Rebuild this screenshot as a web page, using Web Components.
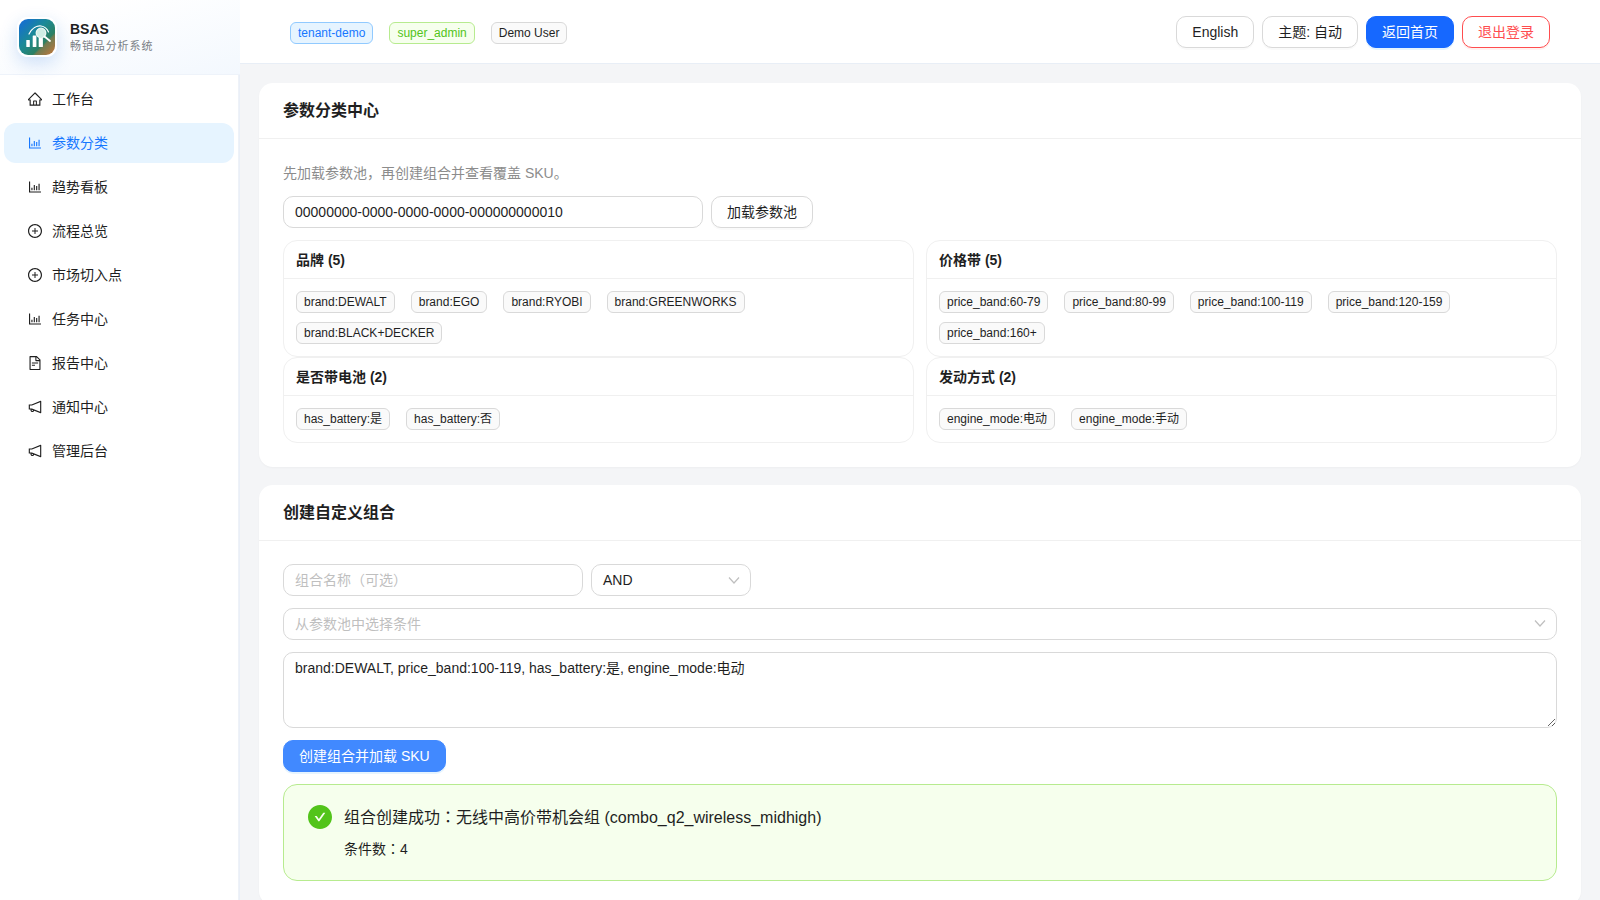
<!DOCTYPE html>
<html lang="zh">
<head>
<meta charset="utf-8">
<title>BSAS</title>
<style>
  html, body { margin: 0; height: 100%; background: #f4f5f7; }
  body { font-family: "Liberation Sans", "Noto Sans CJK SC", sans-serif; font-size: 14px; color: #1f1f1f; }
  /* the reference centres the full width colon in its cell */
  .mid { font-family: "Noto Sans CJK TC", sans-serif; line-height: 1; }
</style>
</head>
<body>
<bs-app>
  <bs-sidebar slot="side">
    <bs-nav icon="home">工作台</bs-nav>
    <bs-nav icon="chart" active>参数分类</bs-nav>
    <bs-nav icon="chart">趋势看板</bs-nav>
    <bs-nav icon="plus">流程总览</bs-nav>
    <bs-nav icon="plus">市场切入点</bs-nav>
    <bs-nav icon="chart">任务中心</bs-nav>
    <bs-nav icon="file">报告中心</bs-nav>
    <bs-nav icon="bell">通知中心</bs-nav>
    <bs-nav icon="bell">管理后台</bs-nav>
  </bs-sidebar>

  <bs-topbar slot="top">
    <bs-tag slot="left" tone="blue">tenant-demo</bs-tag>
    <bs-tag slot="left" tone="green">super_admin</bs-tag>
    <bs-tag slot="left">Demo User</bs-tag>
    <bs-button slot="right">English</bs-button>
    <bs-button slot="right">主题: 自动</bs-button>
    <bs-button slot="right" kind="primary">返回首页</bs-button>
    <bs-button slot="right" kind="danger">退出登录</bs-button>
  </bs-topbar>

  <bs-card heading="参数分类中心">
    <bs-hint>先加载参数池，再创建组合并查看覆盖 SKU。</bs-hint>
    <bs-row>
      <bs-field width="420">00000000-0000-0000-0000-000000000010</bs-field>
      <bs-button>加载参数池</bs-button>
    </bs-row>
    <bs-groups>
      <bs-group heading="品牌 (5)">
        <bs-tag>brand:DEWALT</bs-tag><bs-tag>brand:EGO</bs-tag><bs-tag>brand:RYOBI</bs-tag><bs-tag>brand:GREENWORKS</bs-tag><bs-tag>brand:BLACK+DECKER</bs-tag>
      </bs-group>
      <bs-group heading="价格带 (5)">
        <bs-tag>price_band:60-79</bs-tag><bs-tag>price_band:80-99</bs-tag><bs-tag>price_band:100-119</bs-tag><bs-tag>price_band:120-159</bs-tag><bs-tag>price_band:160+</bs-tag>
      </bs-group>
      <bs-group heading="是否带电池 (2)">
        <bs-tag>has_battery:是</bs-tag><bs-tag>has_battery:否</bs-tag>
      </bs-group>
      <bs-group heading="发动方式 (2)">
        <bs-tag>engine_mode:电动</bs-tag><bs-tag>engine_mode:手动</bs-tag>
      </bs-group>
    </bs-groups>
  </bs-card>

  <bs-card heading="创建自定义组合">
    <bs-row>
      <bs-field width="300" placeholder>组合名称（可选）</bs-field>
      <bs-field width="160" arrow>AND</bs-field>
    </bs-row>
    <bs-field placeholder arrow style="margin-top:12px">从参数池中选择条件</bs-field>
    <bs-textarea style="margin-top:12px">brand:DEWALT, price_band:100-119, has_battery:是, engine_mode:电动</bs-textarea>
    <bs-button kind="soft" style="margin-top:12px">创建组合并加载 SKU</bs-button>
    <bs-alert style="margin-top:12px">
      <span slot="heading">组合创建成功<span class="mid" lang="zh-TW">：</span>无线中高价带机会组 (combo_q2_wireless_midhigh)</span>
      条件数<span class="mid" lang="zh-TW">：</span>4
    </bs-alert>
  </bs-card>
</bs-app>

<script>
// antd outlined icon paths, viewBox 64 64 896 896
const ICONS = {
  home: 'M946.5 505L560.1 118.8l-25.9-25.9a31.5 31.5 0 00-44.4 0L77.5 505a63.9 63.9 0 00-18.8 46c.4 35.2 29.7 63.3 64.9 63.3h42.5V940h691.8V614.3h43.4c17.1 0 33.2-6.7 45.3-18.8a63.6 63.6 0 0018.7-45.3c0-17-6.7-33.1-18.8-45.2zM568 868H456V664h112v204zm217.9-325.7V868H632V640c0-22.1-17.9-40-40-40H432c-22.1 0-40 17.9-40 40v228H238.1V542.3h-96v-.1L512 172l28.9 28.9 342 341.3h-97z',
  chart: 'M888 792H200V168c0-4.4-3.6-8-8-8h-56c-4.4 0-8 3.6-8 8v688c0 4.4 3.6 8 8 8h752c4.4 0 8-3.6 8-8v-56c0-4.4-3.6-8-8-8zm-600-80h56c4.4 0 8-3.6 8-8V560c0-4.4-3.6-8-8-8h-56c-4.4 0-8 3.6-8 8v144c0 4.4 3.6 8 8 8zm152 0h56c4.4 0 8-3.6 8-8V384c0-4.4-3.6-8-8-8h-56c-4.4 0-8 3.6-8 8v320c0 4.4 3.6 8 8 8zm152 0h56c4.4 0 8-3.6 8-8V462c0-4.4-3.6-8-8-8h-56c-4.4 0-8 3.6-8 8v242c0 4.4 3.6 8 8 8zm152 0h56c4.4 0 8-3.6 8-8V304c0-4.4-3.6-8-8-8h-56c-4.4 0-8 3.6-8 8v400c0 4.4 3.6 8 8 8z',
  plus: 'M696 480H544V328c0-4.4-3.6-8-8-8h-48c-4.4 0-8 3.6-8 8v152H328c-4.4 0-8 3.6-8 8v48c0 4.4 3.6 8 8 8h152v152c0 4.4 3.6 8 8 8h48c4.4 0 8-3.6 8-8V544h152c4.4 0 8-3.6 8-8v-48c0-4.4-3.6-8-8-8zM512 64C264.6 64 64 264.6 64 512s200.6 448 448 448 448-200.6 448-448S759.4 64 512 64zm0 820c-205.4 0-372-166.6-372-372s166.6-372 372-372 372 166.6 372 372-166.6 372-372 372z',
  file: 'M854.6 288.6L639.4 73.4c-6-6-14.1-9.4-22.6-9.4H192c-17.7 0-32 14.3-32 32v832c0 17.7 14.3 32 32 32h640c17.7 0 32-14.3 32-32V311.3c0-8.5-3.4-16.7-9.4-22.7zM790.2 326H602V137.8L790.2 326zm1.8 562H232V136h302v216a42 42 0 0042 42h216v494zM504 618H320c-4.4 0-8 3.6-8 8v48c0 4.4 3.6 8 8 8h184c4.4 0 8-3.6 8-8v-48c0-4.4-3.6-8-8-8zM312 490v48c0 4.4 3.6 8 8 8h384c4.4 0 8-3.6 8-8v-48c0-4.4-3.6-8-8-8H320c-4.4 0-8 3.6-8 8z',
  bell: 'M880 112c-3.8 0-7.7.7-11.6 2.3L292 345.9H128c-8.8 0-16 7.4-16 16.6v299c0 9.2 7.2 16.6 16 16.6h101.7c-3.7 11.6-5.7 23.9-5.7 36.4 0 65.9 53.8 119.5 120 119.5 55.4 0 102.1-37.6 115.9-88.4l408.6 164.2c3.9 1.5 7.8 2.3 11.6 2.3 16.9 0 32-14.2 32-33.2V145.2C912 126.2 897 112 880 112zM344 762.3c-26.5 0-48-21.4-48-47.8 0-11.2 3.9-21.9 11-30.4l84.9 34.1c-2 24.6-22.7 44.1-47.9 44.1zm496 58.4L318.8 611.3l-12.9-5.2H184V417.9h121.9l12.9-5.2L840 203.3v617.4z',
  check: 'M512 64C264.6 64 64 264.6 64 512s200.6 448 448 448 448-200.6 448-448S759.4 64 512 64zm193.5 301.7l-210.6 292a31.8 31.8 0 01-51.7 0L318.5 484.9c-3.8-5.3 0-12.7 6.5-12.7h46.9c10.2 0 19.9 4.9 25.9 13.3l71.2 98.8 157.2-218c6-8.3 15.6-13.3 25.9-13.3H699c6.5 0 10.3 7.4 6.5 12.7z'
};

// small helper so every element gets an open shadow root with its own style
class Base extends HTMLElement {
  constructor() {
    super();
    this.shadowDOM = this.attachShadow({mode: 'open'});
  }
  connectedCallback() {
    this.shadowDOM.innerHTML = this.render();
  }
}

class BsApp extends Base {
  render() {
    return `
      <style>
        :host { display: flex; height: 100vh; overflow: hidden; background: #f4f5f7; }
        .right { flex: 1; min-width: 0; display: flex; flex-direction: column; }
        main { flex: 1; min-height: 0; overflow: hidden; padding: 19px 19px 0; display: flex; flex-direction: column; gap: 18px; }
      </style>
      <slot name="side"></slot>
      <div class="right">
        <slot name="top"></slot>
        <main><slot></slot></main>
      </div>`;
  }
}

class BsSidebar extends Base {
  render() {
    return `
      <style>
        :host { display: flex; flex-direction: column; flex: none; width: 240px; box-sizing: border-box; height: 100%; background: #fff; border-right: 1px solid #eaeff7; position: relative; }
        .brand { height: 75px; box-sizing: border-box; display: flex; align-items: center; gap: 13px; padding: 0 0 1px 17px; margin-right: -1px;
          background: linear-gradient(165deg, #ffffff 20%, #f3f8fe 100%); border-bottom: 1px solid #eef3fa; }
        .logo { width: 36px; height: 36px; border-radius: 11px; border: 2px solid #fff; flex: none; overflow: hidden; box-shadow: 0 6px 18px rgba(22, 104, 220, .2); }
        .logo svg { display: block; }
        .name { font-weight: 700; font-size: 14px; line-height: 18px; color: #1f1f1f; }
        .sub { font-size: 11px; line-height: 15px; letter-spacing: .9px; color: #7b7f85; margin-top: 1px; }
        nav { padding-top: 4px; flex: 1; border-right: 1px solid #eef2f8; margin-right: 0; }
      </style>
      <div class="brand">
        <div class="logo">
          <svg width="36" height="36" viewBox="0 0 36 36">
            <defs>
              <linearGradient id="lg" x1="0" y1="0" x2="1" y2="1">
                <stop offset="0" stop-color="#1469dc"/>
                <stop offset=".42" stop-color="#1b8a96"/>
                <stop offset=".68" stop-color="#2c8063"/>
                <stop offset=".72" stop-color="#6f7c52"/>
                <stop offset="1" stop-color="#c8763a"/>
              </linearGradient>
            </defs>
            <rect width="36" height="36" fill="url(#lg)"/>
            <path d="M10 15C13 9 18 6.500 22 7c3 .4 6 2.500 7.500 6" fill="none" stroke="#fff" stroke-width="1.200" stroke-linecap="round"/>
            <rect x="7.300" y="21" width="3.500" height="7" rx=".6" fill="#fff"/>
            <rect x="13.700" y="16.500" width="3.700" height="11.500" rx=".6" fill="#fff"/>
            <rect x="19.700" y="19" width="4.200" height="9" rx=".6" fill="#fff"/>
            <circle cx="22" cy="14" r="4.800" fill="#cfeee6" stroke="#e9f6f2" stroke-width="1.300"/>
            <path d="M25.500 17.500l5.500 4.500" stroke="#fff" stroke-width="1.800" stroke-linecap="round"/>
          </svg>
        </div>
        <div>
          <div class="name">BSAS</div>
          <div class="sub">畅销品分析系统</div>
        </div>
      </div>
      <nav><slot></slot></nav>`;
  }
}

class BsNav extends Base {
  render() {
    const d = ICONS[this.getAttribute('icon')];
    return `
      <style>
        :host { display: flex; align-items: center; gap: 10px; box-sizing: border-box; height: 40px; margin: 0 4px 4px 4px; padding: 0 0 2px 24px; border-radius: 12px; font-size: 14px; color: #1f1f1f; }
        :host([active]) { background: #e6f4ff; color: #1677ff; }
        svg { width: 14px; height: 14px; margin-top: 2px; fill: currentColor; flex: none; }
      </style>
      <svg viewBox="64 64 896 896"><path d="${d}"/></svg>
      <slot></slot>`;
  }
}

class BsTopbar extends Base {
  render() {
    return `
      <style>
        :host { display: flex; flex: none; align-items: center; justify-content: space-between; height: 64px; box-sizing: border-box; padding: 0 50px; background: #fff; border-bottom: 1px solid #e8eef6; }
        .side { display: flex; align-items: center; }
        .tags { gap: 16px; padding-top: 3px; }
        .btns { gap: 8px; }
      </style>
      <div class="side tags"><slot name="left"></slot></div>
      <div class="side btns"><slot name="right"></slot></div>`;
  }
}

class BsTag extends Base {
  render() {
    return `
      <style>
        :host { display: inline-block; box-sizing: border-box; height: 22px; line-height: 20px; padding: 0 7px; font-size: 12px; white-space: nowrap; border: 1px solid #d9d9d9; border-radius: 6px; background: #fafafa; color: #1f1f1f; }
        :host([tone="blue"]) { background: #e6f4ff; border-color: #91caff; color: #1677ff; }
        :host([tone="green"]) { background: #f6ffed; border-color: #b7eb8f; color: #52c41a; }
      </style>
      <slot></slot>`;
  }
}

class BsButton extends Base {
  render() {
    return `
      <style>
        :host { display: inline-block; box-sizing: border-box; width: fit-content; height: 32px; line-height: 30px; padding: 0 15px; font-size: 14px; white-space: nowrap; border: 1px solid #d9d9d9; border-radius: 10px; background: #fff; color: #1f1f1f; box-shadow: 0 2px 0 rgba(0, 0, 0, .02); }
        :host([kind="primary"]) { background: #1668ff; border-color: #1668ff; color: #fff; box-shadow: 0 2px 0 rgba(5, 145, 255, .1); }
        :host([kind="soft"]) { background: #4189ff; border-color: #4189ff; color: #fff; box-shadow: 0 2px 0 rgba(5, 145, 255, .1); }
        :host([kind="danger"]) { border-color: #ff4d4f; color: #ff4d4f; box-shadow: 0 2px 0 rgba(255, 38, 5, .06); }
      </style>
      <slot></slot>`;
  }
}

class BsCard extends Base {
  render() {
    return `
      <style>
        :host { display: block; flex: none; background: #fff; border-radius: 14px; box-shadow: 0 1px 2px rgba(0, 0, 0, .03); }
        .head { height: 56px; box-sizing: border-box; display: flex; align-items: center; padding: 0 24px 4px; font-size: 16px; font-weight: 700; color: #1f1f1f; border-bottom: 1px solid #f0f0f0; }
        .body { padding: 23px 24px 24px; display: flex; flex-direction: column; }
      </style>
      <div class="head">${this.getAttribute('heading')}</div>
      <div class="body"><slot></slot></div>`;
  }
}

class BsHint extends Base {
  render() {
    return `
      <style>
        :host { display: block; font-size: 14px; line-height: 22px; color: #8c8c8c; margin-bottom: 12px; }
      </style>
      <slot></slot>`;
  }
}

class BsRow extends Base {
  render() {
    return `
      <style>
        :host { display: flex; gap: 8px; align-items: center; }
      </style>
      <slot></slot>`;
  }
}

class BsField extends Base {
  render() {
    const w = this.getAttribute('width');
    const arrow = this.hasAttribute('arrow');
    return `
      <style>
        :host { display: flex; align-items: center; justify-content: space-between; box-sizing: border-box; ${w ? `width: ${w}px;` : ''} height: 32px; padding: 0 11px; font-size: 14px; color: #1f1f1f; background: #fff; border: 1px solid #d9d9d9; border-radius: 10px; white-space: nowrap; }
        :host([placeholder]) { color: #bfbfbf; padding-bottom: 2px; }
        svg { flex: none; width: 12px; height: 12px; margin-right: -1px; fill: none; stroke: #bfbfbf; stroke-width: 1.200; }
      </style>
      <slot></slot>
      ${arrow ? '<svg viewBox="0 0 12 12"><path d="M1 3.500l5 5.500 5-5.500"/></svg>' : ''}`;
  }
}

class BsTextarea extends Base {
  connectedCallback() {
    super.connectedCallback();
    this.shadowDOM.querySelector('textarea').textContent = this.textContent;
  }
  render() {
    return `
      <style>
        :host { display: block; }
        textarea { display: block; width: 100%; height: 76px; box-sizing: border-box; margin: 0; padding: 4px 11px; font: inherit; font-size: 14px; line-height: 22px; color: #1f1f1f; border: 1px solid #d9d9d9; border-radius: 10px; outline: 0; resize: vertical; }
      </style>
      <textarea></textarea>`;
  }
}

class BsGroups extends Base {
  render() {
    return `
      <style>
        :host { display: grid; grid-template-columns: 1fr 1fr; column-gap: 12px; margin-top: 12px; }
      </style>
      <slot></slot>`;
  }
}

class BsGroup extends Base {
  render() {
    return `
      <style>
        :host { display: block; box-sizing: border-box; background: #fff; border: 1px solid #f0f0f0; border-radius: 14px; }
        .head { height: 38px; box-sizing: border-box; display: flex; align-items: center; padding: 0 12px 1px; font-size: 14px; font-weight: 700; color: #1f1f1f; border-bottom: 1px solid #f0f0f0; }
        .body { display: flex; flex-wrap: wrap; gap: 9px 16px; padding: 12px; }
      </style>
      <div class="head">${this.getAttribute('heading')}</div>
      <div class="body"><slot></slot></div>`;
  }
}

class BsAlert extends Base {
  render() {
    return `
      <style>
        :host { display: flex; gap: 12px; box-sizing: border-box; padding: 21px 24px 20px; background: #f6ffed; border: 1px solid #b7eb8f; border-radius: 14px; }
        svg { flex: none; width: 24px; height: 24px; margin-top: -1px; fill: #52c41a; }
        .msg { font-size: 16px; line-height: 24px; color: #1f1f1f; margin-bottom: 8px; }
        .desc { font-size: 14px; line-height: 22px; color: #1f1f1f; }
      </style>
      <svg viewBox="64 64 896 896"><path d="${ICONS.check}"/></svg>
      <div>
        <div class="msg"><slot name="heading"></slot></div>
        <div class="desc"><slot></slot></div>
      </div>`;
  }
}

customElements.define('bs-app', BsApp);
customElements.define('bs-sidebar', BsSidebar);
customElements.define('bs-nav', BsNav);
customElements.define('bs-topbar', BsTopbar);
customElements.define('bs-tag', BsTag);
customElements.define('bs-button', BsButton);
customElements.define('bs-card', BsCard);
customElements.define('bs-hint', BsHint);
customElements.define('bs-row', BsRow);
customElements.define('bs-field', BsField);
customElements.define('bs-textarea', BsTextarea);
customElements.define('bs-groups', BsGroups);
customElements.define('bs-group', BsGroup);
customElements.define('bs-alert', BsAlert);
</script>
</body>
</html>
